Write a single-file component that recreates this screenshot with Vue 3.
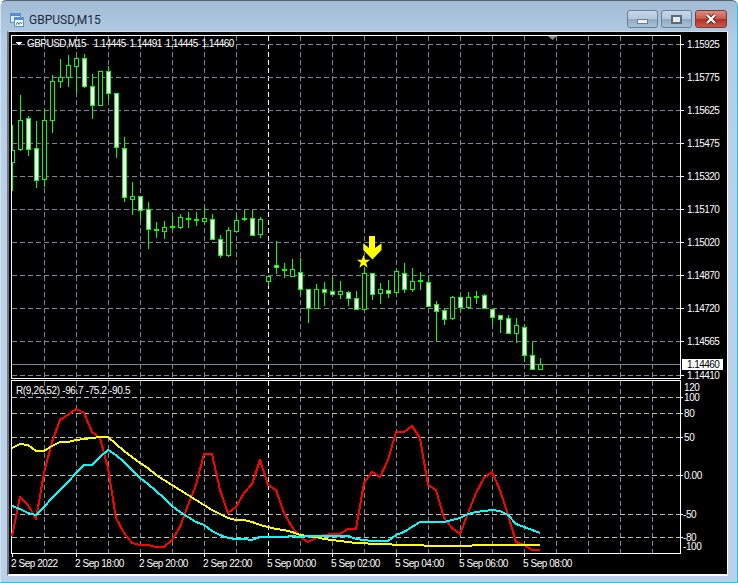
<template>
  <div class="window">
    <header class="titlebar">
      <svg class="app-icon" width="14" height="14" viewBox="0 0 14 14">
        <rect x="0.5" y="0.5" width="10" height="9" fill="#dcebfa" stroke="#5b8fc9" />
        <rect x="1" y="1" width="9" height="2" fill="#4f8fd6" />
        <rect x="4.5" y="4.5" width="9" height="9" fill="#fff" stroke="#5b8fc9" />
        <rect x="5" y="5" width="8" height="2" fill="#4f8fd6" />
        <path d="M6 12 L7.5 9 L9 11.5 L10.5 9 L12 11" fill="none" stroke="#2a7f9e" />
      </svg>
      <span class="title">GBPUSD,M15</span>
      <div class="controls">
        <div class="ctrl">
          <span class="glyph-min"></span>
        </div>
        <div class="ctrl">
          <span class="glyph-max"></span>
        </div>
        <div class="ctrl close">
          <svg width="14" height="12" viewBox="0 0 14 12">
            <path d="M3 2 L11 10 M11 2 L3 10" stroke="#5c1d18" stroke-width="4" />
            <path d="M3 2 L11 10 M11 2 L3 10" stroke="#fff" stroke-width="2.4" />
          </svg>
        </div>
      </div>
    </header>

    <div class="client">
      <svg class="pane" width="718" height="348" viewBox="9 32 718 348">
        <defs>
          <clipPath id="plot">
            <rect x="12" y="36" width="668" height="342" />
          </clipPath>
        </defs>
        <g class="crisp">
          <line v-for="x in vLines" :key="x" :x1="x + 0.5" :x2="x + 0.5" y1="36" y2="378" :stroke="x === 268 ? '#fff' : '#778899'" stroke-dasharray="5 3" />
          <line v-for="p in prices" :key="p.y" x1="12" x2="680" :y1="p.y + 0.5" :y2="p.y + 0.5" stroke="#778899" stroke-dasharray="5 3" />
          <line x1="12" x2="680" y1="364.5" y2="364.5" stroke="#778899" />
          <g clip-path="url(#plot)">
            <g v-for="c in candles" :key="c.x">
              <rect :x="c.x" :y="c.high" width="1" :height="c.low - c.high" fill="#00ff00" />
              <rect :x="c.x - 2" :y="c.top" width="5" :height="c.bottom - c.top + 1" fill="#00ff00" />
              <rect v-if="c.bottom - c.top > 1" :x="c.x - 1" :y="c.top + 1" width="3" :height="c.bottom - c.top - 1" :fill="c.fill" />
            </g>
          </g>
          <path d="M11.5 378.5 V35.5 H680.5 V378.5 Z" fill="none" stroke="#fff" />
          <line v-for="p in prices" :key="p.y" x1="681" x2="684" :y1="p.y + 0.5" :y2="p.y + 0.5" stroke="#fff" />
          <path d="M15.5 42 H22.5 L19 45.5 Z" fill="#fff" />
        </g>
        <path d="M548 36 H557 L552.5 40 Z" fill="#8c8c8c" />
        <text class="label price head" x="27" y="47">GBPUSD,M15&#160; 1.14445 1.14491 1.14445 1.14460</text>
        <text v-for="p in prices" :key="p.y" class="label price" x="687" :y="p.y + 4">{{ p.text }}</text>
        <rect x="682" y="359" width="41" height="11" fill="#fff" />
        <text class="label price bid" x="687" y="368">1.14460</text>
        <polygon points="369,236 375,236 375,248 381.5,243.3 381.5,250 372.5,259.5 363.3,250 363.3,243.3 369,248" fill="#ffff00" />
        <polygon points="363.5,255 365.15,259.73 370.16,259.84 366.16,262.87 367.61,267.66 363.5,264.8 359.39,267.66 360.84,262.87 356.84,259.84 361.85,259.73" fill="#ffff00" />
      </svg>

      <svg class="pane" width="718" height="174" viewBox="9 380 718 174">
        <g class="crisp">
          <line v-for="x in vLines" :key="x" :x1="x + 0.5" :x2="x + 0.5" y1="381" y2="553" :stroke="x === 268 ? '#fff' : '#778899'" stroke-dasharray="5 3" />
          <line v-for="l in levels.filter(l => l.grid)" :key="l.y" x1="12" x2="680" :y1="l.y + 0.5" :y2="l.y + 0.5" stroke="#c0c0c0" stroke-dasharray="5 3" />
          <path d="M11.5 553.5 V380.5 H680.5 V553.5 Z" fill="none" stroke="#fff" />
          <line v-for="l in levels.filter(l => l.grid)" :key="l.y" x1="681" x2="683" :y1="l.y + 0.5" :y2="l.y + 0.5" stroke="#fff" />
          <polyline :points="redLine" class="curve" stroke="#ff0000" />
          <polyline :points="yellowLine" class="curve" stroke="#ffff00" />
          <polyline :points="cyanLine" class="curve" stroke="#00ffff" />
        </g>
        <text class="label ind" x="16" y="394">R(9,26,52) -96.7 -75.2 -90.5</text>
        <text v-for="l in levels" :key="l.text" class="label level" :x="l.x" :y="l.y + 4">{{ l.text }}</text>
      </svg>

      <div class="time-axis">
        <span v-for="t in times" :key="t" class="time">{{ t }}</span>
      </div>
    </div>
  </div>
</template>

<script setup>
const vLines = Array.from({ length: 20 }, (_, i) => 44 + 32 * i);

const prices = [
  ['1.15925', 44], ['1.15775', 77], ['1.15625', 110], ['1.15475', 143],
  ['1.15320', 176], ['1.15170', 209], ['1.15020', 242], ['1.14870', 275],
  ['1.14720', 308], ['1.14565', 341], ['1.14410', 375],
].map(([text, y]) => ({ text, y }));

const levels = [
  { text: '120', y: 387, x: 684, grid: false },
  { text: '100', y: 397, x: 684, grid: true },
  { text: '80', y: 413, x: 684, grid: true },
  { text: '50', y: 437, x: 684, grid: true },
  { text: '0.00', y: 475, x: 684, grid: true },
  { text: '-50', y: 514, x: 683, grid: true },
  { text: '-80', y: 537, x: 683, grid: true },
  { text: '-100', y: 546, x: 683, grid: false },
];

const times = [
  '2 Sep 2022', '2 Sep 18:00', '2 Sep 20:00', '2 Sep 22:00', '5 Sep 00:00',
  '5 Sep 02:00', '5 Sep 04:00', '5 Sep 06:00', '5 Sep 08:00',
];

// high, low, body top, body bottom, w = white body / b = hollow
const rows = [
  [125, 191, 150, 162, 'b'], [95, 151, 120, 149, 'b'], [116, 156, 118, 149, 'w'],
  [121, 188, 148, 180, 'w'], [110, 187, 120, 179, 'b'], [75, 133, 81, 120, 'b'],
  [59, 88, 77, 81, 'b'], [55, 87, 65, 77, 'b'], [57, 93, 58, 66, 'b'],
  [54, 88, 58, 86, 'w'], [74, 119, 86, 105, 'w'], [71, 105, 71, 105, 'b'],
  [66, 100, 71, 93, 'w'], [93, 158, 93, 147, 'w'], [137, 202, 148, 197, 'w'],
  [182, 215, 196, 199, 'b'], [196, 220, 196, 210, 'w'], [202, 249, 209, 229, 'w'],
  [222, 238, 229, 230, 'w'], [221, 239, 227, 231, 'b'], [215, 230, 226, 227, 'w'],
  [214, 229, 217, 227, 'b'], [212, 228, 218, 219, 'w'], [212, 226, 219, 220, 'w'],
  [207, 224, 218, 221, 'b'], [214, 239, 219, 239, 'w'], [235, 258, 239, 255, 'w'],
  [227, 257, 230, 255, 'b'], [215, 232, 220, 231, 'b'], [210, 221, 218, 219, 'w'],
  [210, 236, 218, 235, 'w'], [217, 238, 219, 234, 'b'], [276, 286, 276, 281, 'b'],
  [241, 274, 265, 267, 'w'], [263, 278, 269, 270, 'w'], [259, 277, 269, 276, 'b'],
  [258, 295, 272, 289, 'w'], [289, 323, 289, 308, 'w'], [284, 309, 289, 308, 'b'],
  [282, 306, 289, 292, 'w'], [277, 295, 291, 294, 'w'], [281, 299, 291, 294, 'b'],
  [291, 306, 292, 298, 'w'], [291, 309, 298, 309, 'w'], [267, 309, 273, 309, 'b'],
  [273, 300, 273, 294, 'w'], [283, 304, 289, 293, 'b'], [280, 298, 290, 293, 'w'],
  [270, 292, 271, 292, 'b'], [263, 293, 273, 289, 'w'], [268, 292, 281, 289, 'b'],
  [272, 290, 280, 281, 'w'], [276, 306, 282, 306, 'w'], [301, 341, 304, 311, 'w'],
  [308, 325, 310, 319, 'w'], [296, 320, 297, 318, 'b'], [296, 312, 297, 307, 'w'],
  [292, 309, 297, 307, 'b'], [291, 304, 296, 297, 'w'], [294, 308, 295, 308, 'w'],
  [309, 326, 309, 317, 'w'], [315, 333, 315, 319, 'w'], [315, 333, 318, 333, 'w'],
  [318, 343, 325, 333, 'b'], [325, 362, 327, 355, 'w'], [342, 370, 355, 369, 'w'],
  [358, 369, 364, 369, 'b'],
];

const candles = rows.map(([high, low, top, bottom, f], i) => ({
  x: 12 + 8 * i,
  high,
  low,
  top,
  bottom,
  fill: f === 'w' ? '#fff' : '#000',
}));

const redY = [
  536, 497, 505, 519, 473, 442, 420, 415, 409, 413, 432, 438, 468, 518, 533, 543, 545, 545,
  547, 547, 540, 527, 505, 485, 454, 454, 490, 513, 507, 493, 484, 460, 485, 490, 513, 527,
  537, 542, 538, 535, 534, 534, 529, 529, 483, 472, 477, 460, 432, 432, 426, 438, 485, 490,
  518, 528, 534, 513, 493, 478, 472, 490, 515, 542, 545, 550, 550,
];
const yellowY = [
  448, 444, 445, 451, 451, 446, 442, 442, 440, 439, 438, 437, 437, 444, 451, 457, 463, 468,
  475, 480, 485, 490, 495, 500, 505, 510, 514, 518, 520, 520, 522, 525, 527, 529, 530, 532,
  535, 536, 537, 539, 540, 541, 542, 543, 543, 544, 544, 544, 545, 545, 545, 545, 546, 546,
  546, 546, 546, 546, 545, 545, 545, 545, 545, 545, 545, 545, 545,
];
const cyanY = [
  506, 509, 513, 515, 507, 498, 490, 482, 473, 465, 465, 457, 450, 455, 462, 470, 478, 484,
  491, 498, 506, 512, 517, 522, 525, 531, 535, 538, 539, 539, 540, 537, 537, 537, 537, 536,
  537, 536, 536, 536, 536, 536, 536, 539, 540, 541, 541, 541, 535, 532, 527, 522, 522, 522,
  522, 520, 518, 514, 512, 511, 510, 511, 515, 524, 527, 530, 533,
];

const toPoints = (ys) => ys.map((y, i) => `${12 + 8 * i},${y}`).join(' ');
const redLine = toPoints(redY);
const yellowLine = toPoints(yellowY);
const cyanLine = toPoints(cyanY);
</script>

<style scoped>
.window {
  width: 738px;
  height: 583px;
  box-sizing: border-box;
  display: flex;
  flex-direction: column;
  border-top: 1px solid #56626e;
  border-right: 1px solid #22c4dc;
  border-bottom: 1px solid #22c4dc;
  border-left: 1px solid #d6e2ee;
  border-radius: 6px 6px 0 0;
  background: linear-gradient(180deg, #a3bcd6 0, #b4cde6 40px, #b9d2ea 200px);
  font-family: "Liberation Sans", Arial, sans-serif;
}

.titlebar {
  height: 30px;
  box-sizing: border-box;
  display: flex;
  align-items: center;
  padding: 8px 0 0 9px;
}

.title {
  margin-left: 5px;
  font-family: Roboto, sans-serif;
  font-size: 12px;
  color: #1c2a38;
}

.controls {
  margin-left: auto;
  margin-right: 10px;
  margin-top: -2px;
  display: flex;
  gap: 3px;
}

.ctrl {
  width: 31px;
  height: 18px;
  box-sizing: border-box;
  display: flex;
  align-items: center;
  justify-content: center;
  border: 1px solid #6a7f95;
  border-radius: 3px;
  background: linear-gradient(180deg, #c6d7e8 0, #b4c9de 48%, #8fa9c2 52%, #a9c2da 100%);
}

.ctrl.close {
  width: 32px;
  border-color: #7d3a34;
  background: linear-gradient(180deg, #dd8c80 0, #c9584c 48%, #b03026 52%, #c85a4c 100%);
}

.glyph-min {
  width: 11px;
  height: 5px;
  margin-top: 4px;
  box-sizing: border-box;
  background: #eef2f6;
  border: 1px solid #6f7d8a;
}

.glyph-max {
  width: 11px;
  height: 9px;
  box-sizing: border-box;
  background: #e6ecf2;
  border: 2px solid #5d6b78;
}

.client {
  margin-left: 6px;
  width: 718px;
  height: 542px;
  border-top: 1px solid #d4dde6;
  border-left: 2px solid #6d7580;
  border-right: 1px solid #fff;
  border-bottom: 2px solid #fff;
  background: #000;
  display: flex;
  flex-direction: column;
}

.pane {
  display: block;
  flex: none;
}

.crisp line,
.crisp path,
.crisp rect {
  shape-rendering: crispEdges;
}

.curve {
  fill: none;
  stroke-width: 2;
  stroke-linejoin: round;
  shape-rendering: crispEdges;
}

.label {
  font-family: "Liberation Sans", Arial, sans-serif;
  font-size: 10px;
  fill: #fff;
}

.price {
  letter-spacing: -0.55px;
}

.bid {
  fill: #000;
}

.head {
  word-spacing: 1.5px;
}

.ind {
  letter-spacing: -0.35px;
}

.level {
  letter-spacing: -0.4px;
}

.time-axis {
  flex: 1;
  display: flex;
  padding: 4px 0 0 2px;
}

.time {
  position: relative;
  width: 64px;
  flex: none;
  font-size: 10px;
  line-height: 12px;
  letter-spacing: -0.45px;
  color: #fff;
  white-space: nowrap;
}

.time::before {
  content: "";
  position: absolute;
  left: 1px;
  top: -4px;
  width: 1px;
  height: 3px;
  background: #fff;
}
</style>
